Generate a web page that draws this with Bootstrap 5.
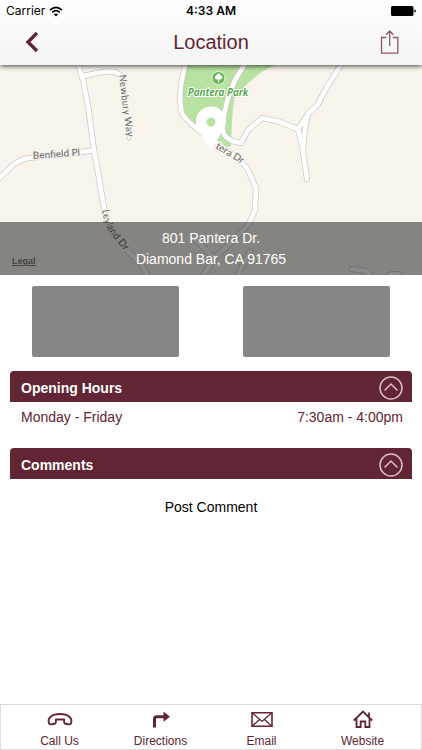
<!DOCTYPE html>
<html lang="en">
<head>
<meta charset="utf-8">
<meta name="viewport" content="width=device-width, initial-scale=1">
<title>Location</title>
<link href="https://cdn.jsdelivr.net/npm/bootstrap@5.3.0/dist/css/bootstrap.min.css" rel="stylesheet">
<style>
  :root { --maroon: #612533; }
  body { font-family: "Liberation Sans", Arial, sans-serif; font-size: 14px; line-height: 20px; color: #000; background: #fff; }
  svg { display: block; }
  .app-header { background: linear-gradient(#fff, #f3f3f3); box-shadow: 0 1px 5px rgba(0,0,0,.75); z-index: 2; }
  .status-bar { height: 22px; font-family: Inter, sans-serif; font-size: 12px; line-height: 22px; padding: 0 6px; }
  .status-time { font-weight: 600; }
  .title-bar { height: 43px; padding: 0 19px 3px; color: var(--maroon); }
  .title-bar h1 { font-size: 20px; line-height: 24px; }
  .map-area { height: 210px; background: #f8f4ec; }
  .map-area text { font-family: Lato, sans-serif; font-size: 10px; font-weight: 500; fill: #706e74; }
  .map-area .park-label { font-family: "Noto Sans", sans-serif; font-size: 10px; font-weight: 600; font-style: italic; fill: #4ca245; stroke: #fff; stroke-width: 2px; paint-order: stroke; }
  .address { background: rgba(0,0,0,.46); padding: 6px 0 5px; line-height: 21px; color: #fff; }
  .legal { left: 12px; bottom: 8px; font-size: 9px; line-height: 12px; font-weight: 700; color: #444; }
  .photo { height: 71px; margin: 11px 32px 14px; background: #868686; border-radius: 2px; }
  .panels { padding: 0 10px; }
  .panel-head { height: 31px; padding: 2px 9px 0 11px; background: var(--maroon); color: #fff; border-radius: 4px 4px 0 0; font-size: 14px; line-height: 20px; }
  .panel-body { height: 46px; padding: 5px 9px 0 11px; color: var(--maroon); }
  .post-comment { padding-top: 18px; }
  .tabs { height: 46px; border: 1px solid #dcdcdc; }
  .tabs a { color: var(--maroon); font-size: 12px; line-height: 16px; padding-top: 4px; }
</style>
<script src="https://cdn.jsdelivr.net/npm/bootstrap@5.3.0/dist/js/bootstrap.bundle.min.js"></script>
</head>
<body class="d-flex flex-column min-vh-100">
<header class="app-header position-relative">
  <div class="status-bar row g-0">
    <div class="col d-flex align-items-center gap-1">
      <span>Carrier</span>
      <svg width="14" height="11" viewBox="0 0 14 11" fill="none" stroke="#000" stroke-width="1.7" aria-hidden="true"><path d="M1 4.1Q7-1.500 13 4.100M3.200 6.400Q7 3 10.800 6.400"/><path d="M7 10.500L4.800 8.300Q7 6.500 9.200 8.300Z" fill="#000" stroke="none"/></svg>
    </div>
    <div class="col-auto status-time">4:33 AM</div>
    <div class="col d-flex align-items-center justify-content-end">
      <svg width="25" height="10" viewBox="0 0 25 10" aria-hidden="true"><rect width="22.500" height="10" rx="1.500"/><path d="M23.300 3.400Q25 3.600 25 5T23.300 6.600Z"/></svg>
    </div>
  </div>
  <div class="title-bar d-flex align-items-center justify-content-between">
    <button class="btn p-0 border-0" type="button" aria-label="Back">
      <svg width="26" height="24" viewBox="0 0 26 24" fill="none" stroke="#612533" stroke-width="3.400"><path d="M18 3L9 12L18 21"/></svg>
    </button>
    <h1 class="mb-0 fw-normal">Location</h1>
    <button class="btn p-0 border-0" type="button" aria-label="Share">
      <svg width="26" height="26" viewBox="0 0 26 26" fill="none" stroke="#8d5a65" stroke-width="1.300"><path d="M9.500 8.500H4.500V24.200H20.800V8.500H15.800M12.700 17V2M9.100 5.700L12.700 2L16.300 5.700"/></svg>
    </button>
  </div>
</header>

<main>
  <section class="map-area position-relative overflow-hidden" aria-label="Map">
    <svg class="w-100 h-100" viewBox="0 65 422 210" preserveAspectRatio="xMidYMid slice">
      <defs>
        <g id="roads" fill="none" stroke-linejoin="round" stroke-linecap="round">
          <path d="M77 60L83 80L88 105L94 150L98 172L104 208Q106 222 113 232L128 251L141 264L150 280"/>
          <path d="M83 76L100 72.500Q118 69 121 77"/>
          <path d="M94 150L75 153L34 157.500Q22 158 13 165L-4 181"/>
          <path d="M186 60L181 85Q179 102 182 113Q185 121 212 140L238 158L247 168L256 188L255 210L249 224L232 242L214 258L201 280"/>
          <path d="M194 238L214 258M250 252L235 280"/>
          <path d="M246 62L235 80L228 98L223 119Q221 132 226 137L232 141L241 143L248 130L262 118L277 121L298 129L308 114L318 104L327 87L344 60"/>
          <path d="M298 129L302 145L305 165L307 179M308 114Q304 130 303 150"/>
          <path d="M352 269L366 271L372 277M384 278L392 274L399 274"/>
        </g>
        <path id="newbury" d="M119 75Q122 104 128 142"/>
        <path id="leyland" d="M102 210Q104 225 113 237L132 260"/>
      </defs>
      <path d="M186 62H280L260 73L247 84L234 99L232 120L231 146L226 147L213 139L193 124Q181 113 181 94Z" fill="#b8e2a2"/>
      <use href="#roads" stroke="#cbc6c3" stroke-width="6"/>
      <circle cx="129" cy="138" r="2" fill="#fff" stroke="#cbc6c3"/>
      <use href="#roads" stroke="#fff" stroke-width="4.600"/>
      <g stroke="#f8f4ec" stroke-width="3" paint-order="stroke">
        <text transform="rotate(-4 33 159)" x="33" y="159">Benfield Pl</text>
        <text><textPath href="#newbury">Newbury Way</textPath></text>
        <text><textPath href="#leyland">Leyland Dr</textPath></text>
        <text transform="rotate(31 215 148)" x="215" y="148">tera Dr</text>
      </g>
      <circle cx="218.500" cy="78" r="6.500" fill="#66b657" stroke="#e4f4dc"/>
      <path d="M218 82.500V79.500Q214.500 80 214.800 77.500Q215 75.500 216.500 75.500Q217 73.500 218.600 73.600Q220.500 73.600 220.700 75.500Q222.500 75.600 222.400 77.600Q222 80 219.200 79.500V82.500Z" fill="#fff"/>
      <text class="park-label" x="218" y="96" text-anchor="middle">Pantera Park</text>
      <path fill="#fff" fill-rule="evenodd" d="M211 151L199 131Q195 126 196 121A15 14.500 0 0 1 226 121Q226 126 222 132ZM211 117.500A4.500 4.500 0 1 0 211 126.500A4.500 4.500 0 1 0 211 117.500Z"/>
    </svg>
    <div class="address position-absolute start-0 end-0 bottom-0 text-center">801 Pantera Dr.<br>Diamond Bar, CA 91765</div>
    <a class="legal position-absolute" href="#legal">Legal</a>
  </section>

  <div class="row g-0">
    <div class="col-6"><div class="photo"></div></div>
    <div class="col-6"><div class="photo"></div></div>
  </div>

  <div class="panels">
    <section>
      <h2 class="panel-head d-flex align-items-center justify-content-between fw-bold mb-0">Opening Hours
        <button class="btn p-0 border-0" type="button" aria-label="Collapse opening hours"><svg width="24" height="24" viewBox="0 0 24 24" fill="none" stroke="#dcbcc4" stroke-width="1.500"><circle cx="12" cy="12" r="11"/><path d="M5.500 14.500L12 8L18.500 14.500"/></svg></button>
      </h2>
      <div class="panel-body d-flex justify-content-between"><span>Monday - Friday</span><span>7:30am - 4:00pm</span></div>
    </section>
    <section>
      <h2 class="panel-head d-flex align-items-center justify-content-between fw-bold mb-0">Comments
        <button class="btn p-0 border-0" type="button" aria-label="Collapse comments"><svg width="24" height="24" viewBox="0 0 24 24" fill="none" stroke="#dcbcc4" stroke-width="1.500"><circle cx="12" cy="12" r="11"/><path d="M5.500 14.500L12 8L18.500 14.500"/></svg></button>
      </h2>
      <div class="post-comment text-center"><a class="text-black text-decoration-none" href="#comment">Post Comment</a></div>
    </section>
  </div>
</main>

<nav class="tabs d-flex mt-auto px-2" aria-label="Contact">
  <a class="col-3 d-flex flex-column align-items-center text-decoration-none" href="#call">
    <svg width="28" height="24" viewBox="0 0 28 24" fill="none" stroke="#612533" stroke-width="1.900" stroke-linejoin="round"><path d="M3 14.500Q1.500 10 5 7.500Q8 5 14 5T23 7.500Q26.500 10 25 14.500Q24 15.800 22 15.200L19 14.500Q17.800 14 18.200 10.500H9.800Q10.200 14 9 14.500L6 15.200Q4 15.800 3 14.500Z"/></svg>Call Us</a>
  <a class="col-3 d-flex flex-column align-items-center text-decoration-none" href="#directions">
    <svg width="24" height="24" viewBox="0 0 24 24"><path d="M5.500 18.500V10Q5.500 7.800 7.800 7.800H16" fill="none" stroke="#612533" stroke-width="3"/><path d="M14.500 2.500L21 7.800L14.500 12.800Z" fill="#612533"/></svg>Directions</a>
  <a class="col-3 d-flex flex-column align-items-center text-decoration-none" href="#email">
    <svg width="24" height="24" viewBox="0 0 24 24" fill="none" stroke="#612533"><path d="M2 3.700H22V17.300H2Z" stroke-width="1.600"/><path d="M2.500 4L12 12.500L21.500 4M2.500 17L9.500 10.500M21.500 17L14.500 10.500" stroke-width="1.300"/></svg>Email</a>
  <a class="col-3 d-flex flex-column align-items-center text-decoration-none" href="#website">
    <svg width="24" height="24" viewBox="0 0 24 24" fill="none" stroke="#612533" stroke-width="1.800"><path d="M2.800 11.500L12 2.500L21.200 11.500M5.500 9.500V18H9.700V12.500H14.300V18H18.500V9.500M18 8V3.500"/></svg>Website</a>
</nav>
</body>
</html>
